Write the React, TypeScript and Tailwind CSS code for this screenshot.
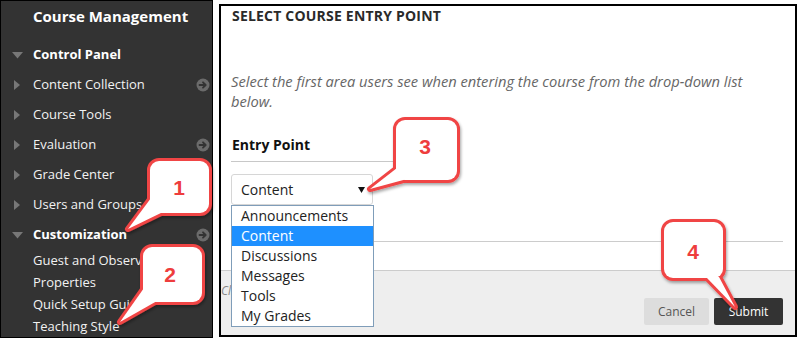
type NavItem = { label: string; bold?: boolean; open?: boolean; more?: boolean };

const NAV: NavItem[] = [
  { label: "Control Panel", bold: true, open: true },
  { label: "Content Collection", more: true },
  { label: "Course Tools" },
  { label: "Evaluation", more: true },
  { label: "Grade Center" },
  { label: "Users and Groups" },
  { label: "Customization", bold: true, open: true, more: true },
];

const SUB_ITEMS = ["Guest and Observer Access", "Properties", "Quick Setup Guide", "Teaching Style"];

const OPTIONS = ["Announcements", "Content", "Discussions", "Messages", "Tools", "My Grades"];

// callout shapes: rect + tail triangle, number centre
const CALLOUTS = [
  { n: "1", x: 150, y: 161, w: 59, h: 52, tail: "151,198 128,229 163,212", cx: 179, cy: 188 },
  { n: "2", x: 143, y: 247, w: 59, h: 55, tail: "144,288 120,322 157,301", cx: 170, cy: 275 },
  { n: "3", x: 396, y: 120, w: 61, h: 60, tail: "397,168 370,189 407,179", cx: 425, cy: 147 },
  { n: "4", x: 664, y: 222, w: 59, h: 56, tail: "706,277 735,307 719,277", cx: 693, cy: 252 },
];

function MoreIcon() {
  return (
    <svg width="14" height="14" viewBox="0 0 14 14" className="shrink-0">
      <circle cx="7" cy="7" r="6.5" fill="#6b6b6b" />
      <path d="M3.5 7h6M7 4.3 9.7 7 7 9.7" stroke="#333" strokeWidth="1.8" fill="none" strokeLinecap="round" strokeLinejoin="round" />
    </svg>
  );
}

function Caret({ open }: { open?: boolean }) {
  return open ? (
    <svg width="11" height="7" viewBox="0 0 11 7" className="shrink-0">
      <path d="M0 0h11L5.5 6.5z" fill="#777" />
    </svg>
  ) : (
    <svg width="11" height="10" viewBox="0 0 11 10" className="shrink-0">
      <path d="M2 0v10l6-5z" fill="#777" />
    </svg>
  );
}

function Sidebar() {
  return (
    <aside className="flex h-[338px] w-[213px] shrink-0 flex-col overflow-hidden border border-black bg-[#333] text-[13px] text-white">
      <div className="flex h-[30px] shrink-0 items-center pl-[32px] text-[15px] font-bold">Course Management</div>
      <div className="h-[9px] shrink-0" />
      {NAV.map((item) => (
        <div key={item.label} className="flex h-[30px] shrink-0 items-center pr-[2px]">
          <div className="flex w-[32px] justify-center pl-[1px]">
            <Caret open={item.open} />
          </div>
          <span className={item.bold ? "flex-1 font-bold" : "flex-1 text-[#f2f2f2]"}>{item.label}</span>
          {item.more && <MoreIcon />}
        </div>
      ))}
      {SUB_ITEMS.map((label) => (
        <div key={label} className="flex h-[22px] shrink-0 items-center whitespace-nowrap pl-[32px] text-[#f2f2f2]">
          {label}
        </div>
      ))}
    </aside>
  );
}

function EntrySelect() {
  return (
    <div className="relative mt-[12px] w-[142px]">
      <div className="flex h-[31px] items-center justify-between rounded-[3px] border border-[#d6d6d6] bg-white pl-[9px] pr-[7px] text-[14px] text-[#222]">
        <span>Content</span>
        <svg width="7" height="6" viewBox="0 0 7 6">
          <path d="M0 0h7L3.5 6z" fill="#111" />
        </svg>
      </div>
      <ul className="absolute left-0 top-full z-10 w-[143px] border border-[#7f9db9] bg-white text-[14px] text-[#222]">
        {OPTIONS.map((opt) => (
          <li
            key={opt}
            className={
              opt === "Content"
                ? "h-[20px] bg-[#1e90ff] pl-[9px] leading-[20px] text-white"
                : "h-[20px] pl-[9px] leading-[20px]"
            }
          >
            {opt}
          </li>
        ))}
      </ul>
    </div>
  );
}

function EntryPanel() {
  return (
    <main className="ml-[6px] mt-[4px] flex h-[333px] w-[578px] flex-col border-2 border-black bg-white">
      <div className="flex flex-col pl-[10px] pr-[12px]">
        <h1 className="h-[20px] pl-[1px] text-[14px] font-bold leading-[20px] tracking-[0.2px] text-[#2a2a2a]">
          SELECT COURSE ENTRY POINT
        </h1>
        <p className="mt-[45px] max-w-[545px] text-[14.7px] italic leading-[20px] text-[#666]">
          Select the first area users see when entering the course from the drop-down list below.
        </p>
        <div className="mt-[24px] w-[165px] border-b border-[#c8c8c8] pb-[6px] pl-[1px] text-[14px] font-bold leading-[20px] text-[#111]">
          Entry Point
        </div>
        <EntrySelect />
        <div className="mt-[36px] border-t border-[#cccccc]" />
      </div>
      <div className="flex-1" />
      <footer className="flex h-[65px] shrink-0 border-t border-[#cccccc] bg-[#eeeeee] pr-[12px]">
        <span className="pt-[12px] text-[12px] italic leading-[16px] text-[#888]">Click Submit to proceed.</span>
        <div className="ml-auto mt-[27px] flex h-[27px] gap-[5px] text-[12px]">
          <button type="button" className="w-[65px] rounded-[2px] bg-[#dddddd] text-[#555]">
            Cancel
          </button>
          <button type="button" className="w-[69px] rounded-[2px] bg-[#333] text-white">
            Submit
          </button>
        </div>
      </footer>
    </main>
  );
}

function Callouts() {
  return (
    <>
      <svg width="802" height="344" className="pointer-events-none absolute left-0 top-0 z-20">
        <defs>
          <filter id="shadow" x="-20%" y="-20%" width="140%" height="140%">
            <feDropShadow dx="1" dy="2" stdDeviation="1.6" floodColor="#000" floodOpacity="0.35" />
          </filter>
        </defs>
        <g filter="url(#shadow)">
          {CALLOUTS.map((c) => (
            <g key={c.n} stroke="#f04444" strokeWidth="6" strokeLinejoin="round" fill="#f04444">
              <rect x={c.x} y={c.y} width={c.w} height={c.h} rx="9" />
              <polygon points={c.tail} />
            </g>
          ))}
          {CALLOUTS.map((c) => (
            <g key={c.n} fill="#fff">
              <rect x={c.x} y={c.y} width={c.w} height={c.h} rx="9" />
              <polygon points={c.tail} />
            </g>
          ))}
        </g>
      </svg>
      {CALLOUTS.map((c) => (
        <span
          key={c.n}
          className="absolute z-30 flex h-[24px] w-[20px] -translate-x-1/2 -translate-y-1/2 items-center justify-center font-['Liberation_Sans'] text-[21px] font-bold text-[#ee3d3d]"
          style={{ left: c.cx, top: c.cy }}
        >
          {c.n}
        </span>
      ))}
    </>
  );
}

export default function App() {
  return (
    <div className="relative flex h-[344px] w-[802px] items-start overflow-hidden bg-white font-['Open_Sans',sans-serif]">
      <Sidebar />
      <EntryPanel />
      <Callouts />
    </div>
  );
}
